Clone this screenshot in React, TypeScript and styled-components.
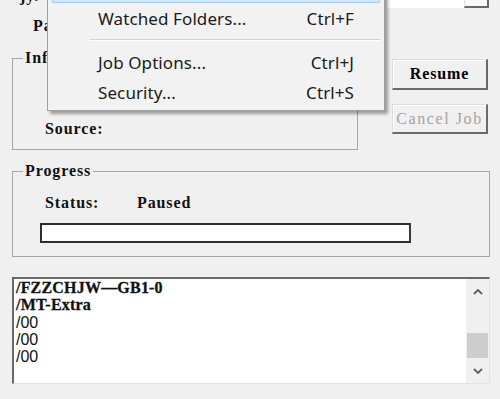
import React from "react";
import styled, { createGlobalStyle } from "styled-components";

const Global = createGlobalStyle`
  html, body { margin: 0; padding: 0; background: #f0f0f0; overflow: hidden; }
`;

const Window = styled.div`
  position: relative;
  width: 500px;
  height: 399px;
  overflow: hidden;
  box-sizing: border-box;
  padding: 0 10px 0 12px;
  background: #f0f0f0;
  display: flex;
  flex-direction: column;
  font-family: "Liberation Serif", "DejaVu Serif", serif;
  font-weight: bold;
  font-size: 16px;
  letter-spacing: 0.9px;
  color: #111;
`;

const TopStrip = styled.div`
  height: 49px;
  display: flex;
  justify-content: space-between;
  align-items: flex-start;
`;

const TopLabels = styled.div`
  display: flex;
  flex-direction: column;
  line-height: 16px;
`;

const Fragment = styled.span<{ $top: number; $left: number }>`
  margin-top: ${(p) => p.$top}px;
  padding-left: ${(p) => p.$left}px;
  white-space: nowrap;
`;

const Combo = styled.div`
  margin-top: -20px;
  margin-right: 1px;
  width: 102px;
  height: 28px;
  display: flex;
  box-sizing: border-box;
  background: #fff;
`;

const ComboField = styled.div`
  flex: 1;
`;

const ComboButton = styled.div`
  width: 25px;
  box-sizing: border-box;
  background: #fafafa;
  border-right: 2px solid #6a6a6a;
  border-bottom: 2px solid #6a6a6a;
  border-left: 1px solid #e0e0e0;
`;

const MiddleRow = styled.div`
  display: flex;
  align-items: flex-start;
`;

const Group = styled.fieldset<{ $w?: number; $h: number }>`
  margin: 0;
  padding: 0;
  min-width: 0;
  box-sizing: border-box;
  ${(p) => (p.$w ? `width: ${p.$w}px;` : "")}
  height: ${(p) => p.$h}px;
  border: 1px solid #a6a6a6;
  border-radius: 0;
`;

const Legend = styled.legend`
  margin-left: 10px;
  padding: 0 2px;
  line-height: 18px;
`;

const InfoBody = styled.div`
  padding: 54px 0 0 32px;
  line-height: 16px;
`;

const ButtonColumn = styled.div`
  margin-left: 34px;
  padding-top: 10px;
  display: flex;
  flex-direction: column;
  gap: 14px;
`;

const DlgButton = styled.div<{ $disabled?: boolean; $h: number }>`
  width: 96px;
  height: ${(p) => p.$h}px;
  box-sizing: border-box;
  display: flex;
  align-items: center;
  justify-content: center;
  background: #f0f0f0;
  border-style: solid;
  border-width: 1px 2px 2px 1px;
  border-color: #dcdcdc #6a6a6a #6a6a6a #dcdcdc;
  box-shadow: inset 1px 1px 0 #fff;
  color: ${(p) => (p.$disabled ? "#a3a3a3" : "#000")};
  font-weight: ${(p) => (p.$disabled ? "normal" : "bold")};
  letter-spacing: ${(p) => (p.$disabled ? "1.6px" : "0.9px")};
  white-space: nowrap;
`;

const ProgressGroup = styled(Group)`
  margin-top: 12px;
`;

const StatusRow = styled.div`
  display: grid;
  grid-template-columns: 92px auto;
  padding: 15px 0 0 32px;
  line-height: 16px;
`;

const Bar = styled.div`
  margin: 12px 0 0 27px;
  width: 371px;
  height: 20px;
  box-sizing: border-box;
  background: #fff;
  border: 2px solid #2e2e2e;
  border-right-color: #3a3a3a;
`;

const LogBox = styled.div`
  margin-top: 20px;
  height: 107px;
  box-sizing: border-box;
  display: flex;
  background: #fff;
  border-style: solid;
  border-width: 2px 1px 1px 2px;
  border-color: #6a6a6a #e3e3e3 #e3e3e3 #6a6a6a;
`;

const LogText = styled.div`
  flex: 1;
  padding: 0 0 0 2px;
  line-height: 17.25px;
  font-weight: normal;
`;

const LogLine = styled.div<{ $sans?: boolean }>`
  white-space: nowrap;
  ${(p) =>
    p.$sans
      ? `font-family: "Liberation Sans", Arial, sans-serif; font-size: 16px; letter-spacing: 0;`
      : `font-weight: 600; letter-spacing: 0.2px; -webkit-text-stroke: 0.3px #111;`}
`;

const Scrollbar = styled.div`
  width: 23px;
  display: flex;
  flex-direction: column;
  background: #f0f0f0;
`;

const ScrollArrow = styled.div`
  height: 25px;
  display: flex;
  align-items: center;
  justify-content: center;
`;

const Track = styled.div`
  flex: 1;
  display: flex;
  flex-direction: column;
  justify-content: flex-end;
`;

const Thumb = styled.div`
  height: 25px;
  margin: 0 1px;
  background: #cdcdcd;
`;

const Menu = styled.div`
  position: absolute;
  left: 47px;
  top: -30px;
  width: 338px;
  box-sizing: border-box;
  padding: 2px 4px 3px 4px;
  background: #f2f2f2;
  border: 1px solid #a0a0a0;
  box-shadow: 3px 3px 3px rgba(0, 0, 0, 0.35);
  font-family: "Noto Sans", "Open Sans", sans-serif;
  font-weight: normal;
  font-size: 17px;
  letter-spacing: 0.1px;
  color: #1a1a1a;
`;

const MenuItem = styled.div<{ $hot?: boolean }>`
  height: 30px;
  box-sizing: border-box;
  display: grid;
  grid-template-columns: 1fr auto;
  align-items: center;
  padding: 0 25px 0 45px;
  background: ${(p) => (p.$hot ? "#cce8ff" : "transparent")};
  border: 1px solid ${(p) => (p.$hot ? "#99d1ff" : "transparent")};
`;

const Separator = styled.div`
  margin: 6px 0 6px 38px;
  height: 0;
  border-top: 1px solid #d3d3d3;
  border-bottom: 1px solid #fff;
`;

const Chevron = ({ up }: { up?: boolean }) => (
  <svg width="10" height="6" viewBox="0 0 10 6">
    <path
      d={up ? "M1 5 L5 1 L9 5" : "M1 1 L5 5 L9 1"}
      fill="none"
      stroke="#606060"
      strokeWidth="1.8"
    />
  </svg>
);

export default function App() {
  return (
    <>
      <Global />
      <Window>
        <TopStrip>
          <TopLabels>
            <Fragment $top={-12} $left={8}>jy.</Fragment>
            <Fragment $top={14} $left={21}>Pa</Fragment>
          </TopLabels>
          <Combo>
            <ComboField />
            <ComboButton />
          </Combo>
        </TopStrip>

        <MiddleRow>
          <Group $w={346} $h={101}>
            <Legend>Info</Legend>
            <InfoBody>Source:</InfoBody>
          </Group>
          <ButtonColumn>
            <DlgButton $h={31}>Resume</DlgButton>
            <DlgButton $h={30} $disabled>Cancel Job</DlgButton>
          </ButtonColumn>
        </MiddleRow>

        <ProgressGroup $h={95}>
          <Legend>Progress</Legend>
          <StatusRow>
            <span>Status:</span>
            <span>Paused</span>
          </StatusRow>
          <Bar />
        </ProgressGroup>

        <LogBox>
          <LogText>
            <LogLine>/FZZCHJW—GB1-0</LogLine>
            <LogLine>/MT-Extra</LogLine>
            <LogLine $sans>/00</LogLine>
            <LogLine $sans>/00</LogLine>
            <LogLine $sans>/00</LogLine>
          </LogText>
          <Scrollbar>
            <ScrollArrow>
              <Chevron up />
            </ScrollArrow>
            <Track>
              <Thumb />
            </Track>
            <ScrollArrow>
              <Chevron />
            </ScrollArrow>
          </Scrollbar>
        </LogBox>

        <Menu>
          <MenuItem $hot />
          <MenuItem>
            <span>Watched Folders...</span>
            <span>Ctrl+F</span>
          </MenuItem>
          <Separator />
          <MenuItem>
            <span>Job Options...</span>
            <span>Ctrl+J</span>
          </MenuItem>
          <MenuItem>
            <span>Security...</span>
            <span>Ctrl+S</span>
          </MenuItem>
        </Menu>
      </Window>
    </>
  );
}
